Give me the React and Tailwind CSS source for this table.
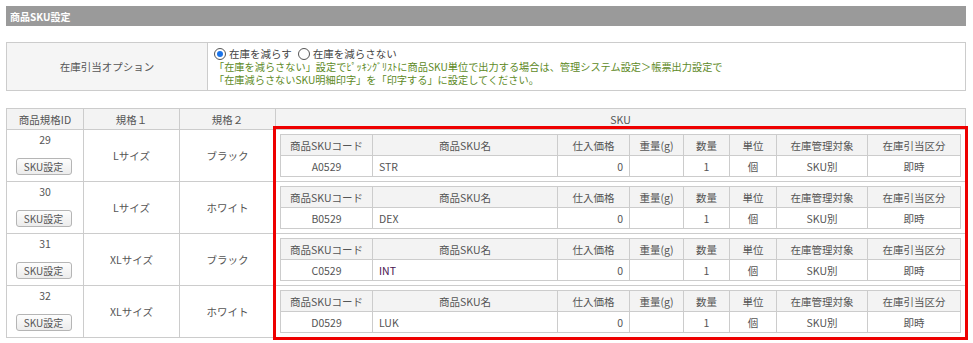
import React from "react";

const rows = [
  { id: "29", s1: "Lサイズ", s2: "ブラック", code: "A0529", name: "STR" },
  { id: "30", s1: "Lサイズ", s2: "ホワイト", code: "B0529", name: "DEX" },
  { id: "31", s1: "XLサイズ", s2: "ブラック", code: "C0529", name: "INT", purple: true },
  { id: "32", s1: "XLサイズ", s2: "ホワイト", code: "D0529", name: "LUK" },
];

const th = "border border-[#cccccc] bg-[#f3f3f3] font-normal text-center h-[21px] p-0";
const td = "border border-[#cccccc] bg-white h-[21px] p-0";

function SkuTable({ r }) {
  return (
    <table className="w-full border-collapse table-fixed">
      <colgroup>
        <col className="w-[92px]" />
        <col className="w-[185px]" />
        <col className="w-[72px]" />
        <col className="w-[54px]" />
        <col className="w-[46px]" />
        <col className="w-[47px]" />
        <col className="w-[91px]" />
        <col />
      </colgroup>
      <thead>
        <tr>
          <th className={th}>商品SKUコード</th>
          <th className={th}>商品SKU名</th>
          <th className={th}>仕入価格</th>
          <th className={th}>重量(g)</th>
          <th className={th}>数量</th>
          <th className={th}>単位</th>
          <th className={th}>在庫管理対象</th>
          <th className={th}>在庫引当区分</th>
        </tr>
      </thead>
      <tbody>
        <tr>
          <td className={td + " text-center"}>{r.code}</td>
          <td className={td + " text-left pl-[6px]" + (r.purple ? " text-[#4a1450]" : "")}>{r.name}</td>
          <td className={td + " text-right pr-[6px]"}>0</td>
          <td className={td}></td>
          <td className={td + " text-center"}>1</td>
          <td className={td + " text-center"}>個</td>
          <td className={td + " text-center"}>SKU別</td>
          <td className={td + " text-center"}>即時</td>
        </tr>
      </tbody>
    </table>
  );
}

function Radio({ checked }) {
  return (
    <span className="inline-block w-[12px] h-[12px] rounded-full border border-[#555] bg-white relative align-[-2px] mr-[3px]">
      {checked && (
        <span className="absolute left-[2px] top-[2px] w-[6px] h-[6px] rounded-full bg-[#1a73e8]" />
      )}
    </span>
  );
}

export default function App() {
  return (
    <div
      className="w-[973px] h-[343px] bg-white text-[#555] text-[10.5px] leading-[13px] pt-[6px] pl-[6px] pr-[7px] relative"
      style={{ fontFamily: '"Noto Sans CJK JP", "Noto Sans", sans-serif' }}
    >
      <div className="h-[20px] bg-[#9a9a9a] text-white font-bold text-[10px] flex items-center pl-[4px]">
        商品SKU設定
      </div>

      <table className="w-full border-collapse mt-[16px] table-fixed">
        <colgroup>
          <col className="w-[201px]" />
          <col />
        </colgroup>
        <tbody>
          <tr className="h-[48px]">
            <td className="border border-[#cccccc] bg-[#f5f5f5] text-center p-0">在庫引当オプション</td>
            <td className="border border-[#cccccc] pl-[6px] py-[3px] leading-[13px]">
              <div className="text-[#444] h-[13px] flex items-center">
                <Radio checked />在庫を減らす<span className="inline-block w-[6px]" />
                <Radio />在庫を減らさない
              </div>
              <div className="text-[#5e8a1f] text-[10.2px]">
                「在庫を減らさない」設定でﾋﾟｯｷﾝｸﾞﾘｽﾄに商品SKU単位で出力する場合は、管理システム設定＞帳票出力設定で
              </div>
              <div className="text-[#5e8a1f] text-[10.2px]">「在庫減らさないSKU明細印字」を「印字する」に設定してください。</div>
            </td>
          </tr>
        </tbody>
      </table>

      <table className="w-full border-collapse mt-[17px] table-fixed">
        <colgroup>
          <col className="w-[77px]" />
          <col className="w-[96px]" />
          <col className="w-[96px]" />
          <col />
        </colgroup>
        <thead>
          <tr className="h-[21px]">
            <th className="border border-[#cccccc] bg-[#f3f3f3] font-normal p-0">商品規格ID</th>
            <th className="border border-[#cccccc] bg-[#f3f3f3] font-normal p-0">規格１</th>
            <th className="border border-[#cccccc] bg-[#f3f3f3] font-normal p-0">規格２</th>
            <th className="border border-[#cccccc] bg-[#f3f3f3] font-normal p-0">SKU</th>
          </tr>
        </thead>
        <tbody>
          {rows.map((r) => (
            <tr key={r.id} className="h-[52px]">
              <td className="border border-[#cccccc] p-0 align-top">
                <div className="flex flex-col items-center pt-[3px]">
                  <div className="h-[13px]">{r.id}</div>
                  <button className="mt-[12px] w-[56px] h-[17px] rounded-[3px] border border-[#b5b5b5] bg-gradient-to-b from-[#fdfdfd] to-[#ececec] text-[10px] text-[#555] leading-[15px] -ml-[3px]">
                    SKU設定
                  </button>
                </div>
              </td>
              <td className="border border-[#cccccc] text-center p-0">{r.s1}</td>
              <td className="border border-[#cccccc] text-center p-0">{r.s2}</td>
              <td className="border border-[#cccccc] px-[4px] py-[4px]">
                <SkuTable r={r} />
              </td>
            </tr>
          ))}
        </tbody>
      </table>

      <div className="absolute left-[273px] top-[126px] w-[695px] h-[214px] border-[3px] border-[#ee0000] pointer-events-none" />
    </div>
  );
}
